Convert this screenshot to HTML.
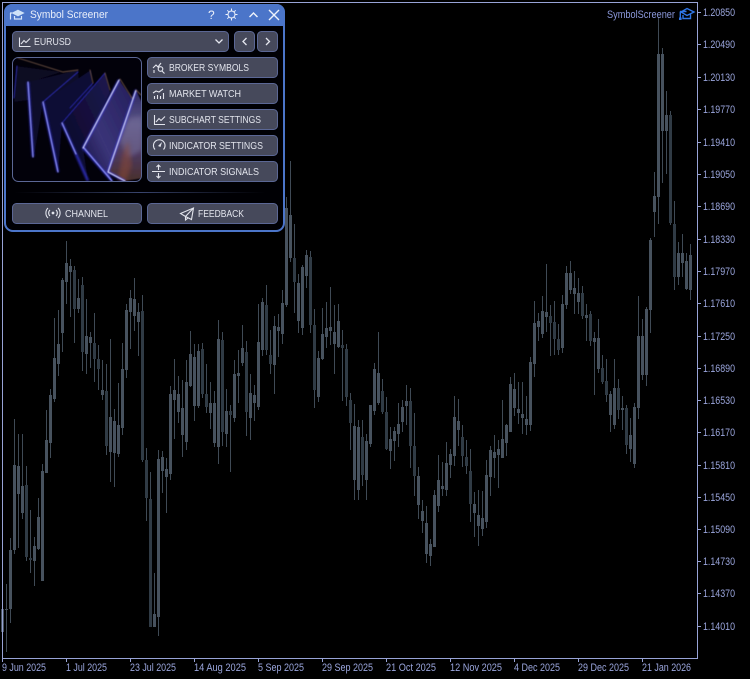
<!DOCTYPE html>
<html><head><meta charset="utf-8"><style>
html,body{margin:0;padding:0;background:#000;width:750px;height:679px;overflow:hidden}
svg{display:block}
.ax{font-family:"Liberation Sans",sans-serif;font-size:11px;fill:#9aa5dc}
.b{font-family:"Liberation Sans",sans-serif;font-size:10.5px;fill:#e2e4ec}
.bx{fill:#46495b;stroke:#5b6795;stroke-width:1}
.ic{fill:none;stroke:#e2e4ec;stroke-width:1.1}
</style></head><body>
<svg width="750" height="679" viewBox="0 0 750 679" xmlns="http://www.w3.org/2000/svg">
<defs>
<clipPath id="im"><rect x="12.5" y="57.5" width="129" height="124" rx="6"/></clipPath>
<filter id="bl"><feGaussianBlur stdDeviation="0.5"/></filter>
<filter id="b2"><feGaussianBlur stdDeviation="2"/></filter>
<filter id="gl"><feGaussianBlur stdDeviation="1.1"/></filter>
<linearGradient id="sep" x1="0" x2="1" y1="0" y2="0"><stop offset="0" stop-color="#2b3350" stop-opacity="0"/><stop offset=".5" stop-color="#39456f"/><stop offset="1" stop-color="#2b3350" stop-opacity="0"/></linearGradient>
<linearGradient id="pf" x1="0" x2="0" y1="0" y2="1"><stop offset="0" stop-color="#2b2660"/><stop offset=".38" stop-color="#5c5688"/><stop offset=".7" stop-color="#4d3a60"/><stop offset="1" stop-color="#4a2f2c"/></linearGradient>
<linearGradient id="pe" x1="1" x2="0" y1="0" y2="1"><stop offset="0" stop-color="#241f5c"/><stop offset=".6" stop-color="#3a3478"/><stop offset="1" stop-color="#141040"/></linearGradient>
<linearGradient id="pd" x1="1" x2="0" y1="0" y2="1"><stop offset="0" stop-color="#1d1850"/><stop offset="1" stop-color="#090722"/></linearGradient>
</defs>
<rect width="750" height="679" fill="#000"/>

<!-- wicks -->
<path fill="none" stroke="#3f4a55" stroke-width="1" d="M2.5 607V634M6.5 584V652M10.5 538V623M14.5 419V554M18.5 434V548M22.5 434V519M26.5 466V561M30.5 510V573M34.5 537V586M38.5 498V550M42.5 464V581M46.5 410V473M50.5 389V458M54.5 318V402M58.5 310V376M62.5 278V352M66.5 241V304M70.5 259V317M74.5 266V343M78.5 279V313M82.5 277V371M86.5 299V374M90.5 332V368M94.5 313V382M98.5 345V390M102.5 360V400M106.5 364V455M110.5 339V482M114.5 409V487M118.5 383V457M122.5 343V435M126.5 304V378M130.5 290V349M134.5 278V331M138.5 303V356M142.5 295V462M146.5 448V521M150.5 472V627M154.5 573V627M158.5 450V636M162.5 451V493M166.5 458V513M170.5 386V480M174.5 359V439M178.5 376V423M182.5 380V457M186.5 360V450M190.5 331V387M194.5 344V421M198.5 344V408M202.5 343V398M206.5 364V413M210.5 382V429M214.5 391V447M218.5 320V464M222.5 332V446M226.5 389V447M230.5 405V472M234.5 360V422M238.5 350V403M242.5 325V366M246.5 341V436M250.5 374V440M254.5 385V421M258.5 304V410M262.5 298V356M266.5 285V355M270.5 330V374M274.5 316V394M278.5 314V357M282.5 290V344M286.5 197V307M290.5 161V262M294.5 224V313M298.5 274V333M302.5 265V335M306.5 250V288M310.5 251V333M314.5 309V408M318.5 351V402M322.5 308V360M326.5 302V348M330.5 287V345M334.5 305V374M338.5 304V348M342.5 330V401M346.5 344V406M350.5 393V450M354.5 404V500M358.5 420V500M362.5 420V486M366.5 434V500M370.5 405V447M374.5 363V415M378.5 332V405M382.5 379V414M386.5 397V450M390.5 427V469M394.5 427V461M398.5 403V447M402.5 400V432M406.5 385V425M410.5 388V468M414.5 413V496M418.5 467V519M422.5 500V533M426.5 506V563M430.5 539V566M434.5 490V547M438.5 455V512M442.5 462V496M446.5 442V496M450.5 449V478M454.5 396V466M458.5 399V446M462.5 425V467M466.5 440V474M470.5 449V522M474.5 492V537M478.5 490V546M482.5 491V536M486.5 460V528M490.5 446V496M494.5 435V478M498.5 440V488M502.5 400V458M506.5 424V456M510.5 377V432M514.5 373V416M518.5 382V424M522.5 382V434M526.5 396V435M530.5 357V431M534.5 301V377M538.5 313V341M542.5 296V338M546.5 264V332M550.5 305V356M554.5 301V355M558.5 324V355M562.5 295V353M566.5 266V309M570.5 261V294M574.5 271V314M578.5 278V314M582.5 286V319M586.5 304V341M590.5 311V346M594.5 332V395M598.5 319V373M602.5 355V384M606.5 359V402M610.5 391V432M614.5 359V429M618.5 379V419M622.5 396V430M626.5 405V454M630.5 418V462M634.5 403V468M638.5 296V419M642.5 319V380M646.5 307V386M650.5 238V333M654.5 172V237M658.5 17V224M662.5 48V183M666.5 91V174M670.5 111V225M674.5 201V290M678.5 242V285M682.5 234V277M686.5 253V290M690.5 244V300"/>
<!-- light bodies -->
<path fill="none" stroke="#47525e" stroke-width="3" d="M2.5 609V632M6.5 609V610M10.5 550V609M14.5 465V550M18.5 466V494M22.5 486V513M34.5 546V561M38.5 517V549M42.5 471V581M46.5 440V473M50.5 395V443M54.5 358V399M58.5 344V364M62.5 280V333M66.5 263V282M70.5 266V272M78.5 298V309M86.5 336V354M90.5 337V343M102.5 390V395M110.5 417V452M114.5 421V453M118.5 425V454M122.5 369V428M126.5 310V370M130.5 298V312M134.5 299V316M138.5 312V322M154.5 614V627M158.5 459V617M162.5 457V471M166.5 469V477M170.5 394V474M174.5 390V400M178.5 394V412M182.5 408V435M186.5 382V442M190.5 354V386M194.5 357V406M198.5 351V406M210.5 403V413M214.5 403V443M218.5 339V447M226.5 411V434M234.5 374V418M238.5 373V376M242.5 348V363M250.5 393V418M254.5 395V403M258.5 342V407M262.5 302V350M274.5 326V365M278.5 327V331M282.5 303V334M286.5 208V305M290.5 215V258M298.5 283V321M302.5 267V328M306.5 255V276M318.5 358V397M322.5 334V359M326.5 328V337M330.5 327V331M334.5 332V344M338.5 321V347M354.5 426V480M358.5 427V490M366.5 441V480M370.5 405V444M374.5 369V411M378.5 373V403M390.5 439V451M394.5 431V441M398.5 424V434M402.5 407V422M406.5 401V406M418.5 476V505M422.5 511V521M426.5 523V554M430.5 544V556M434.5 495V547M438.5 480V506M442.5 486V489M446.5 463V490M450.5 454V465M454.5 417V456M458.5 421V430M474.5 504V513M478.5 515V526M482.5 518V529M486.5 475V522M490.5 450V477M494.5 452V458M498.5 449V455M502.5 439V458M506.5 425V443M510.5 384V432M514.5 389V408M518.5 409V413M522.5 414V418M526.5 419V425M530.5 362V425M534.5 323V364M538.5 321V327M542.5 311V334M546.5 312V317M562.5 304V348M566.5 273V305M570.5 273V290M574.5 288V294M578.5 293V302M586.5 315V318M594.5 338V342M598.5 338V369M610.5 394V415M614.5 388V425M622.5 408V410M630.5 435V449M634.5 407V464M638.5 336V408M642.5 336V375M646.5 309V375M650.5 240V310M654.5 196V212M658.5 54V197M662.5 54V131M666.5 115V131M678.5 253V277M682.5 253V263M686.5 261V289M690.5 255V290"/>
<!-- dark bodies -->
<path fill="none" stroke="#303b45" stroke-width="3" d="M26.5 485V557M30.5 558V560M74.5 270V309M82.5 285V352M94.5 343V359M98.5 359V369M106.5 391V446M142.5 311V460M146.5 460V498M150.5 499V627M202.5 349V394M206.5 394V407M222.5 340V432M230.5 411V415M246.5 352V412M266.5 305V350M270.5 355V364M294.5 258V282M310.5 257V325M314.5 325V390M342.5 345V348M346.5 349V397M350.5 400V423M362.5 437V475M382.5 391V412M386.5 412V449M410.5 401V446M414.5 446V476M462.5 437V456M466.5 457V466M470.5 471V504M550.5 316V323M554.5 322V339M558.5 339V350M582.5 293V316M590.5 314V341M602.5 368V382M606.5 381V395M618.5 388V410M626.5 408V445M670.5 115V223M674.5 224V277"/>

<!-- axes -->
<path fill="none" stroke="#98a3d6" stroke-width="1" d="M2.5 2.5H697.5V658.5H2.5ZM698 12.5h3M698 44.5h3M698 77.5h3M698 109.5h3M698 142.5h3M698 174.5h3M698 206.5h3M698 239.5h3M698 271.5h3M698 303.5h3M698 336.5h3M698 368.5h3M698 400.5h3M698 432.5h3M698 465.5h3M698 497.5h3M698 529.5h3M698 561.5h3M698 593.5h3M698 626.5h3M2.5 659v3M66.5 659v3M130.5 659v3M194.5 659v3M258.5 659v3M322.5 659v3M386.5 659v3M450.5 659v3M514.5 659v3M578.5 659v3M642.5 659v3"/>
<g class="ax">
<text x="703" y="16" textLength="32" lengthAdjust="spacingAndGlyphs">1.20850</text>
<text x="703" y="48" textLength="32" lengthAdjust="spacingAndGlyphs">1.20490</text>
<text x="703" y="81" textLength="32" lengthAdjust="spacingAndGlyphs">1.20130</text>
<text x="703" y="113" textLength="32" lengthAdjust="spacingAndGlyphs">1.19770</text>
<text x="703" y="146" textLength="32" lengthAdjust="spacingAndGlyphs">1.19410</text>
<text x="703" y="178" textLength="32" lengthAdjust="spacingAndGlyphs">1.19050</text>
<text x="703" y="210" textLength="32" lengthAdjust="spacingAndGlyphs">1.18690</text>
<text x="703" y="243" textLength="32" lengthAdjust="spacingAndGlyphs">1.18330</text>
<text x="703" y="275" textLength="32" lengthAdjust="spacingAndGlyphs">1.17970</text>
<text x="703" y="307" textLength="32" lengthAdjust="spacingAndGlyphs">1.17610</text>
<text x="703" y="340" textLength="32" lengthAdjust="spacingAndGlyphs">1.17250</text>
<text x="703" y="372" textLength="32" lengthAdjust="spacingAndGlyphs">1.16890</text>
<text x="703" y="404" textLength="32" lengthAdjust="spacingAndGlyphs">1.16530</text>
<text x="703" y="436" textLength="32" lengthAdjust="spacingAndGlyphs">1.16170</text>
<text x="703" y="469" textLength="32" lengthAdjust="spacingAndGlyphs">1.15810</text>
<text x="703" y="501" textLength="32" lengthAdjust="spacingAndGlyphs">1.15450</text>
<text x="703" y="533" textLength="32" lengthAdjust="spacingAndGlyphs">1.15090</text>
<text x="703" y="565" textLength="32" lengthAdjust="spacingAndGlyphs">1.14730</text>
<text x="703" y="597" textLength="32" lengthAdjust="spacingAndGlyphs">1.14370</text>
<text x="703" y="630" textLength="32" lengthAdjust="spacingAndGlyphs">1.14010</text>
<text x="2" y="671" textLength="44" lengthAdjust="spacingAndGlyphs">9 Jun 2025</text>
<text x="66" y="671" textLength="41" lengthAdjust="spacingAndGlyphs">1 Jul 2025</text>
<text x="130" y="671" textLength="46" lengthAdjust="spacingAndGlyphs">23 Jul 2025</text>
<text x="194" y="671" textLength="52" lengthAdjust="spacingAndGlyphs">14 Aug 2025</text>
<text x="258" y="671" textLength="46" lengthAdjust="spacingAndGlyphs">5 Sep 2025</text>
<text x="322" y="671" textLength="51" lengthAdjust="spacingAndGlyphs">29 Sep 2025</text>
<text x="386" y="671" textLength="50" lengthAdjust="spacingAndGlyphs">21 Oct 2025</text>
<text x="450" y="671" textLength="52" lengthAdjust="spacingAndGlyphs">12 Nov 2025</text>
<text x="514" y="671" textLength="46" lengthAdjust="spacingAndGlyphs">4 Dec 2025</text>
<text x="578" y="671" textLength="51" lengthAdjust="spacingAndGlyphs">29 Dec 2025</text>
<text x="642" y="671" textLength="49" lengthAdjust="spacingAndGlyphs">21 Jan 2026</text>
<text x="607" y="18" textLength="68" lengthAdjust="spacingAndGlyphs" style="fill:#8a97da">SymbolScreener</text>
</g>
<!-- top right cap -->
<g fill="none" stroke="#2f76e6" stroke-width="1.4">
<path d="M680 11.5h6.5M687 8.5l7 3.5-7 3.5-6-3.5zM683 15v3.5h7.5v-4.5M680.3 11.5v6.5"/>
</g>
<path fill="#2f76e6" d="M679 17.5h2.6v2.5h-2.6z"/>

<!-- panel -->
<rect x="5" y="5" width="279" height="226" rx="8" fill="#000004" stroke="#4b75c9" stroke-width="2"/>
<path fill="#4b75c9" d="M4 26V12a8 8 0 0 1 8-8H277a8 8 0 0 1 8 8V26Z"/>
<path fill="#cfe2f8" stroke="#cfe2f8" stroke-width=".6" d="M18 10l6 3-6 3-6-3z"/>
<path fill="none" stroke="#d8e6fa" stroke-width="1.2" d="M14.5 16v3h7v-3M10 13h2M10.5 13v6.5"/>
<text x="30" y="18" font-family="Liberation Sans, sans-serif" font-size="11" fill="#e8eefa" textLength="78" lengthAdjust="spacingAndGlyphs">Symbol Screener</text>
<text x="208" y="19" font-family="Liberation Sans, sans-serif" font-size="12" fill="#eef2fb">?</text>
<g fill="none" stroke="#eef2fb" stroke-width="1">
<circle cx="231.5" cy="14.5" r="3.5"/>
<path d="M231.5 8.5v2M231.5 18.5v2M225.5 14.5h2M235.5 14.5h2M227.3 10.3l1.4 1.4M234.3 17.3l1.4 1.4M235.7 10.3l-1.4 1.4M228.7 17.3l-1.4 1.4"/>
</g>
<path fill="none" stroke="#eef2fb" stroke-width="1.4" d="M249.5 17l4-4 4 4M269 10l10 10M279 10l-10 10"/>

<!-- dropdown -->
<rect class="bx" x="12.5" y="31.5" width="216" height="20" rx="4"/>
<path class="ic" d="M19.5 37.5V46.5H30.5M21 44l3-3.5 2 2 4-4"/>
<text class="b" x="34" y="45" textLength="37" lengthAdjust="spacingAndGlyphs">EURUSD</text>
<path fill="none" stroke="#e4e6ee" stroke-width="1.3" d="M215.5 39.5l3.5 3.5 3.5-3.5"/>
<rect class="bx" x="234.5" y="31.5" width="20" height="20" rx="4"/>
<rect class="bx" x="257.5" y="31.5" width="20" height="20" rx="4"/>
<path fill="none" stroke="#e4e6ee" stroke-width="1.3" d="M246.5 38l-3.5 3.5 3.5 3.5M266 38l3.5 3.5-3.5 3.5"/>

<!-- picture -->
<g clip-path="url(#im)">
<rect x="12" y="57" width="130" height="125" fill="#02010a"/>
<g filter="url(#bl)">
<polygon points="16,66 62,72 30,82 30,100 14,102" fill="#080720"/>
<polygon points="28,82 78,70 80,95 43,102 34,157" fill="#0b0a2c"/>
<polygon points="43,102 91,70 94,100 62,123 58,172" fill="#0f0c34"/>
<polygon points="62,123 105,73 110,92 83,148 88,181" fill="url(#pd)"/>
<polygon points="83,148 119,80 132,98 108,172 112,181" fill="url(#pe)"/>
<polygon points="108,172 136,90 143,105 143,178 125,181" fill="url(#pf)"/>
</g>
<polygon points="120,140 130,118 142,116 142,150 128,158" fill="#77709a" opacity=".55" filter="url(#b2)"/>
<polygon points="118,181 122,155 128,140 132,165 126,181" fill="#8a4a38" opacity=".55" filter="url(#b2)"/>
<g filter="url(#gl)" fill="none" stroke="#3c3cf0" stroke-width="2.2" opacity=".8">
<path d="M28 82L33 157M43 102L58 172M62 123L88 181M83 148L119 80M83 148L112 181M108 172L136 90M108 172L125 181"/>
</g>
<g fill="none" stroke-linecap="round" filter="url(#bl)">
<path stroke="#2a2ab4" stroke-width=".9" d="M17 66L14 98M62 123L105 73M43 102L78 72M93 83L70 108"/>
<path stroke="#9fa4ff" stroke-width="1" d="M28 82L33 157M43 102L58 172M62 123L76 154M84 148L112 181"/>
<path stroke="#dfe2ff" stroke-width="1.1" d="M83 148L119 80M108 172L136 90M108 172L125 181"/>
<path stroke="#6d5142" stroke-width=".9" d="M18 58L63 72 78 70M90 70L93 83M105 73L110 90M120 79L132 98M136 90L141 95"/>
</g>
</g>
<rect x="12.5" y="57.5" width="129" height="124" rx="6" fill="none" stroke="#5b6795"/>

<!-- buttons -->
<rect class="bx" x="147.5" y="57.5" width="130" height="20" rx="4"/>
<rect class="bx" x="147.5" y="83.5" width="130" height="20" rx="4"/>
<rect class="bx" x="147.5" y="109.5" width="130" height="20" rx="4"/>
<rect class="bx" x="147.5" y="135.5" width="130" height="20" rx="4"/>
<rect class="bx" x="147.5" y="161.5" width="130" height="20" rx="4"/>
<text class="b" x="169" y="71" textLength="80" lengthAdjust="spacingAndGlyphs">BROKER SYMBOLS</text>
<text class="b" x="169" y="97" textLength="72" lengthAdjust="spacingAndGlyphs">MARKET WATCH</text>
<text class="b" x="169" y="123" textLength="92" lengthAdjust="spacingAndGlyphs">SUBCHART SETTINGS</text>
<text class="b" x="169" y="149" textLength="94" lengthAdjust="spacingAndGlyphs">INDICATOR SETTINGS</text>
<text class="b" x="169" y="175" textLength="90" lengthAdjust="spacingAndGlyphs">INDICATOR SIGNALS</text>
<path class="ic" d="M153 68l3-3 2 2 3-4"/><circle class="ic" cx="160.5" cy="69" r="2.3"/><path class="ic" d="M162 71l2.5 2.5M154 70v3"/>
<path class="ic" d="M153 93l3-2 3 1 4-3M154.5 99v-3M157.5 99v-4M160.5 99v-3M163.5 99v-6"/>
<path class="ic" d="M154.5 115v9.5H165M156 122l3-3.5 2 2 4-4"/>
<path class="ic" stroke-width="1.2" d="M155 149.5a5.8 5.8 0 1 1 8.5 0"/><path fill="#e2e4ec" d="M158 146l4-4 -1.5 5z"/>
<path class="ic" d="M152 171.5h13M158.5 165v5M158.5 173v5M156.5 167l2-2 2 2M156.5 176l2 2 2-2"/>

<!-- separator -->
<rect x="14" y="192" width="252" height="1" fill="url(#sep)"/>

<rect class="bx" x="12.5" y="203.5" width="129" height="20" rx="4"/>
<rect class="bx" x="147.5" y="203.5" width="130" height="20" rx="4"/>
<text class="b" x="65" y="217" textLength="43" lengthAdjust="spacingAndGlyphs">CHANNEL</text>
<text class="b" x="198" y="217" textLength="46" lengthAdjust="spacingAndGlyphs">FEEDBACK</text>
<circle cx="53" cy="213" r="1.4" fill="#e2e4ec"/>
<path class="ic" d="M50 210a4 4 0 0 0 0 6M56 210a4 4 0 0 1 0 6M48 208a7 7 0 0 0 0 10M58 208a7 7 0 0 1 0 10"/>
<path class="ic" d="M180.5 213.5L193.5 208 191.5 219.5 185.5 216.5ZM193.5 208L185.5 216.5V220L188 218"/>
</svg>
</body></html>
